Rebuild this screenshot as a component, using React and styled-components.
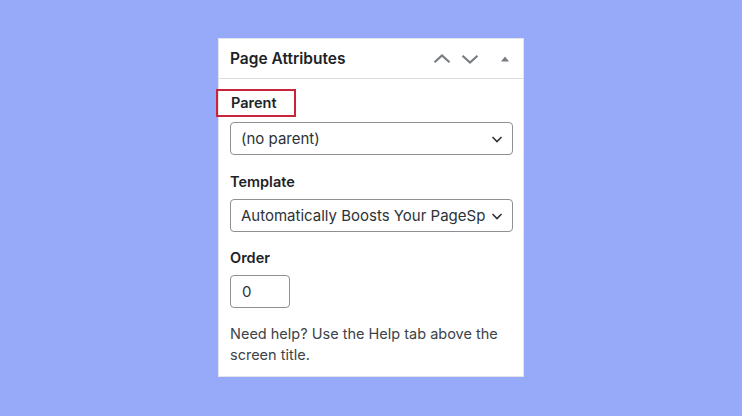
import React from "react";
import styled, { createGlobalStyle } from "styled-components";

const GlobalStyle = createGlobalStyle`
    html, body {
        margin: 0;
        padding: 0;
        background: #97a9f9;
    }
    body {
        font-family: Inter, "Noto Sans", sans-serif;
        color: #1d2327;
    }
`;

const Stage = styled.div`
    width: 742px;
    height: 416px;
    display: flex;
    justify-content: center;
    padding-top: 38px;
    box-sizing: border-box;
`;

const Panel = styled.section`
    width: 306px;
    height: 339px;
    box-sizing: border-box;
    background: #fff;
    border: 1px solid #e2e4e7;
`;

const Header = styled.div`
    height: 40px;
    box-sizing: border-box;
    border-bottom: 1px solid #dcdcde;
    display: flex;
    align-items: center;
    padding: 0 6px 0 11px;
`;

const Title = styled.h2`
    flex: 1;
    margin: 0;
    font-size: 15.5px;
    font-weight: 600;
    color: #1d2327;
`;

const IconButton = styled.button`
    width: 24px;
    height: 24px;
    padding: 0;
    border: 0;
    margin-left: ${(p) => p.$gap || 0}px;
    background: none;
    display: flex;
    align-items: center;
    justify-content: center;
    color: #787c82;
`;

const Body = styled.div`
    padding: 11px 10px 0 11px;
`;

const Label = styled.div`
    font-size: 14.5px;
    font-weight: 600;
    color: #1d2327;
    line-height: 20px;
    margin: ${(p) => p.$top || 0}px 0 ${(p) => p.$bottom || 7}px 0;
`;

const Highlight = styled.span`
    display: inline-block;
    margin: -1px 0 0 -14px;
    padding: 2px 17px 2px 13px;
    border: 2px solid #c8243b;
`;

const SelectBox = styled.div`
    position: relative;
    height: 33px;
    box-sizing: border-box;
    border: 1px solid #8c8f94;
    border-radius: 4px;
    display: flex;
    align-items: center;
    padding: 0 27px 0 10px;
    font-size: 15px;
    color: #2c3338;
`;

const SelectText = styled.span`
    white-space: nowrap;
    overflow: hidden;
`;

const Chevron = styled.svg`
    position: absolute;
    right: 7px;
    top: 50%;
    margin-top: -8px;
    width: 16px;
    height: 16px;
`;

const NumberBox = styled.div`
    width: 60px;
    height: 33px;
    box-sizing: border-box;
    border: 1px solid #8c8f94;
    border-radius: 4px;
    display: flex;
    align-items: center;
    padding-left: 11px;
    font-size: 15px;
    color: #2c3338;
`;

const Help = styled.p`
    margin: 15px 0 0 0;
    font-size: 14.5px;
    line-height: 21px;
    color: #3c434a;
`;

const Select = ({ children }) => (
    <SelectBox>
        <SelectText>{children}</SelectText>
        <Chevron viewBox="0 0 16 16">
            <path d="M3.5 6 L8 10.5 L12.5 6" fill="none" stroke="#2c3338" strokeWidth="1.6" />
        </Chevron>
    </SelectBox>
);

const App = () => (
    <Stage>
        <GlobalStyle />
        <Panel>
            <Header>
                <Title>Page Attributes</Title>
                <IconButton aria-label="Move up">
                    <svg width="20" height="20" viewBox="0 0 20 20">
                        <path d="M2.5 13.2 L10 6.5 L17.5 13.2" fill="none" stroke="currentColor" strokeWidth="2.2" />
                    </svg>
                </IconButton>
                <IconButton aria-label="Move down" $gap={4}>
                    <svg width="20" height="20" viewBox="0 0 20 20">
                        <path d="M2.5 6.8 L10 13.5 L17.5 6.8" fill="none" stroke="currentColor" strokeWidth="2.2" />
                    </svg>
                </IconButton>
                <IconButton aria-label="Toggle panel" $gap={11}>
                    <svg width="12" height="12" viewBox="0 0 12 12">
                        <path d="M2 8.5 L6 3.5 L10 8.5 Z" fill="currentColor" />
                    </svg>
                </IconButton>
            </Header>
            <Body>
                <Label $bottom={5}>
                    <Highlight>Parent</Highlight>
                </Label>
                <Select>(no parent)</Select>
                <Label $top={17}>Template</Label>
                <Select>Automatically Boosts Your PageSpeed Template</Select>
                <Label $top={16}>Order</Label>
                <NumberBox>0</NumberBox>
                <Help>Need help? Use the Help tab above the screen title.</Help>
            </Body>
        </Panel>
    </Stage>
);

export default App;
